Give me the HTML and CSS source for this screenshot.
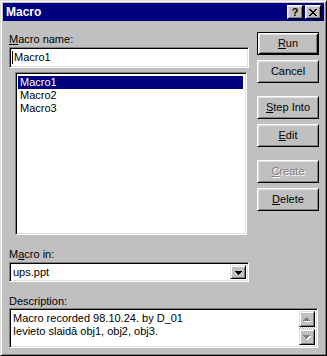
FILE: index.html
```html
<!DOCTYPE html>
<html>
<head>
<meta charset="utf-8">
<link rel="stylesheet" href="styles.css">
</head>
<body>
<div class="window">
  <div class="titlebar">
    <span class="title">Macro</span>
    <div class="tbtns">
      <div class="tbtn help">?</div>
      <div class="tbtn close">
        <svg width="8" height="7" viewBox="0 0 8 7" shape-rendering="crispEdges">
          <path d="M0 0h2v1H0zM6 0h2v1H6zM1 1h2v1H1zM5 1h2v1H5zM2 2h4v1H2zM3 3h2v1H3zM2 4h4v1H2zM1 5h2v1H1zM5 5h2v1H5zM0 6h2v1H0zM6 6h2v1H6z" fill="#000"/>
        </svg>
      </div>
    </div>
  </div>
  <div class="content">
    <div class="toprow">
      <div class="leftcol">
        <div class="label"><u>M</u>acro name:</div>
        <div class="field textbox"><span class="caret"></span>Macro1</div>
        <ul class="field list">
          <li class="sel">Macro1</li>
          <li>Macro2</li>
          <li>Macro3</li>
        </ul>
      </div>
      <div class="rightcol">
        <div class="btn default"><u>R</u>un</div>
        <div class="btn">Cancel</div>
        <div class="btn group"><u>S</u>tep Into</div>
        <div class="btn"><u>E</u>dit</div>
        <div class="btn group disabled"><u>C</u>reate</div>
        <div class="btn"><u>D</u>elete</div>
      </div>
    </div>
    <div class="label spaced">M<u>a</u>cro in:</div>
    <div class="field combo">
      <span class="value">ups.ppt</span>
      <span class="ddbtn">
        <svg width="7" height="4" viewBox="0 0 7 4" shape-rendering="crispEdges">
          <path d="M0 0h7v1H0zM1 1h5v1H1zM2 2h3v1H2zM3 3h1v1H3z" fill="#000"/>
        </svg>
      </span>
    </div>
    <div class="label spaced">Description:</div>
    <div class="field desc">
      <div class="desctext">
        <div>Macro recorded 98.10.24. by D_01</div>
        <div>Ievieto slaidā obj1, obj2, obj3.</div>
      </div>
      <div class="vscroll">
        <span class="sbtn">
          <svg width="8" height="5" viewBox="0 0 8 5" shape-rendering="crispEdges">
            <path d="M4 1h1v1H4zM3 2h3v1H3zM2 3h5v1H2zM1 4h7v1H1z" fill="#fff"/>
            <path d="M3 0h1v1H3zM2 1h3v1H2zM1 2h5v1H1zM0 3h7v1H0z" fill="#808080"/>
          </svg>
        </span>
        <span class="track"></span>
        <span class="sbtn">
          <svg width="8" height="5" viewBox="0 0 8 5" shape-rendering="crispEdges">
            <path d="M1 1h7v1H1zM2 2h5v1H2zM3 3h3v1H3zM4 4h1v1H4z" fill="#fff"/>
            <path d="M0 0h7v1H0zM1 1h5v1H1zM2 2h3v1H2zM3 3h1v1H3z" fill="#808080"/>
          </svg>
        </span>
      </div>
    </div>
  </div>
</div>
</body>
</html>
```
FILE: styles.css
```css
html, body {
  margin: 0;
  padding: 0;
  background: #c0c0c0;
}
body {
  font-family: "Liberation Sans", Arial, sans-serif;
  font-size: 11px;
  line-height: 13px;
  color: #000;
}
* { box-sizing: border-box; }

.window {
  width: 327px;
  height: 356px;
  background: #c0c0c0;
  border: 1px solid;
  border-color: #dfdfdf #000 #000 #dfdfdf;
  box-shadow: inset 1px 1px #fff, inset -1px -1px #808080;
  padding: 2px;
  display: flex;
  flex-direction: column;
}

.titlebar {
  height: 18px;
  background: #000080;
  color: #fff;
  display: flex;
  align-items: center;
  justify-content: space-between;
  padding: 0 3px 0 3px;
}
.title {
  font-weight: bold;
  font-size: 12px;
  line-height: 14px;
}
.tbtns {
  display: flex;
  gap: 2px;
}
.tbtn {
  width: 16px;
  height: 14px;
  background: #c0c0c0;
  border: 1px solid;
  border-color: #fff #000 #000 #fff;
  box-shadow: inset 1px 1px #dfdfdf, inset -1px -1px #808080;
  display: flex;
  align-items: center;
  justify-content: center;
  color: #000;
}
.help {
  font-weight: bold;
  font-size: 11px;
  line-height: 12px;
  padding-bottom: 1px;
}
.close svg { display: block; }

.content {
  padding: 0 5px 0 6px;
  flex: 1;
  display: flex;
  flex-direction: column;
}
.toprow {
  display: flex;
}
.leftcol {
  width: 240px;
  padding-top: 12px;
  display: flex;
  flex-direction: column;
}
.rightcol {
  margin-left: 8px;
  width: 62px;
  padding-top: 11px;
  display: flex;
  flex-direction: column;
}

.label {
  height: 13px;
  white-space: nowrap;
}
.label u, .btn u { text-decoration: underline; text-underline-offset: 1px; }
.spaced { margin-top: 13px; }

.field {
  background: #fff;
  border: 1px solid;
  border-color: #808080 #fff #fff #808080;
  box-shadow: inset 1px 1px #000, inset -1px -1px #dfdfdf;
  padding: 1px;
}

.textbox {
  margin-top: 1px;
  height: 21px;
  display: flex;
  align-items: center;
  padding-left: 2px;
  white-space: nowrap;
}
.caret {
  width: 1px;
  height: 13px;
  background: #000;
  margin-right: 1px;
}

.list {
  list-style: none;
  margin: 4px 0 0 6px;
  width: 232px;
  height: 163px;
  padding: 3px 3px 0 2px;
}
.list li {
  height: 13px;
  padding-left: 2px;
  white-space: nowrap;
}
.list li.sel {
  background: #000080;
  color: #fff;
}

.btn {
  height: 23px;
  background: #c0c0c0;
  border: 1px solid;
  border-color: #fff #000 #000 #fff;
  box-shadow: inset 1px 1px #dfdfdf, inset -1px -1px #808080;
  display: flex;
  align-items: center;
  justify-content: center;
  margin-bottom: 5px;
  white-space: nowrap;
}
.btn.default {
  border-color: #000;
  box-shadow: inset 1px 1px #fff, inset -1px -1px #000, inset 2px 2px #dfdfdf, inset -2px -2px #808080;
}
.btn.group { margin-top: 8px; }
.btn.disabled {
  color: #808080;
  text-shadow: 1px 1px 0 #fff;
}

.combo {
  margin-top: 1px;
  width: 240px;
  height: 20px;
  display: flex;
  align-items: stretch;
  padding: 2px;
}
.combo .value {
  flex: 1;
  display: flex;
  align-items: center;
  padding-left: 1px;
}
.ddbtn {
  width: 16px;
  background: #c0c0c0;
  border: 1px solid;
  border-color: #dfdfdf #000 #000 #dfdfdf;
  box-shadow: inset 1px 1px #fff, inset -1px -1px #808080;
  display: flex;
  align-items: center;
  justify-content: center;
}
.ddbtn svg { display: block; margin-top: 1px; }

.desc {
  width: 309px;
  height: 40px;
  display: flex;
  padding: 2px;
}
.desctext {
  flex: 1;
  padding: 1px 0 0 1px;
  white-space: nowrap;
}
.vscroll {
  width: 16px;
  display: flex;
  flex-direction: column;
}
.sbtn {
  height: 16px;
  background: #c0c0c0;
  border: 1px solid;
  border-color: #dfdfdf #000 #000 #dfdfdf;
  box-shadow: inset 1px 1px #fff, inset -1px -1px #808080;
  display: flex;
  align-items: center;
  justify-content: center;
}
.track {
  flex: 1;
  background: repeating-conic-gradient(#c0c0c0 0 25%, #fff 0 50%) 0 0 / 2px 2px;
}
```
